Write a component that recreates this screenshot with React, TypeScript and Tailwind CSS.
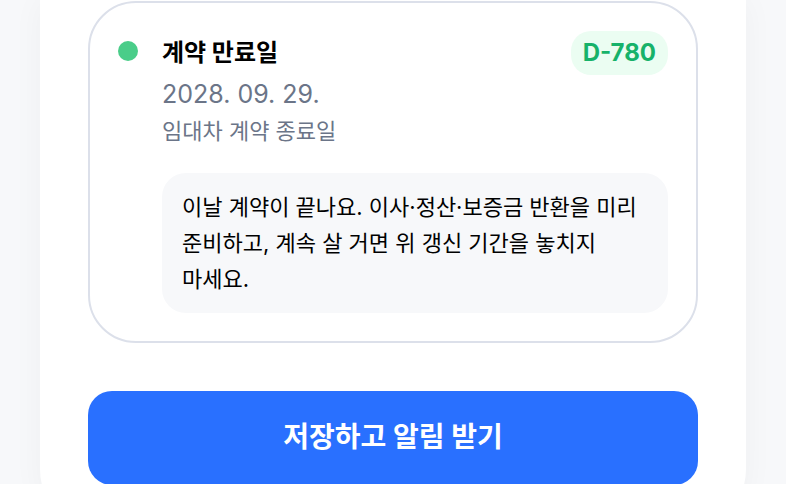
// contract reminder card with the save button
export default function App() {
  return (
    <main className="h-screen overflow-hidden bg-[#f7f8fa] px-10 font-['Inter','Noto_Sans_CJK_KR',sans-serif] text-black">
      <section className="rounded-b-[64px] bg-white px-12 pt-px pb-12 shadow-[0_0_32px_rgba(0,0,0,0.04)]">
        <article className="flex items-start gap-6 rounded-[48px] border-2 border-[#dce0ea] p-7">
          <span className="mt-2.5 size-5 shrink-0 rounded-full bg-[#4acd89]" />
          <div className="min-w-0 flex-1">
            <div className="flex items-start justify-between">
              <div>
                <h2 className="text-[24px] leading-[44px] font-bold">계약 만료일</h2>
                <p className="text-[25px] leading-[38px] text-[#6b7588]">2028. 09. 29.</p>
                <p className="text-[22px] leading-9 text-[#6b7588]">임대차 계약 종료일</p>
              </div>
              <span className="rounded-[20px] bg-[#ebfdf2] px-3 text-[24px] leading-[44px] font-bold text-[#17b26a]">
                D-780
              </span>
            </div>
            <p className="mt-6 rounded-3xl bg-[#f7f8fa] px-5 py-4 text-[22px] leading-9 break-keep">
              이날 계약이 끝나요. 이사·정산·보증금 반환을 미리 준비하고, 계속 살 거면 위 갱신 기간을 놓치지 마세요.
            </p>
          </div>
        </article>

        <button
          type="button"
          className="mt-12 w-full rounded-3xl bg-[#2970ff] pt-6 pb-[26px] text-[28px] leading-[44px] font-bold text-white"
        >
          저장하고 알림 받기
        </button>
      </section>
    </main>
  );
}
